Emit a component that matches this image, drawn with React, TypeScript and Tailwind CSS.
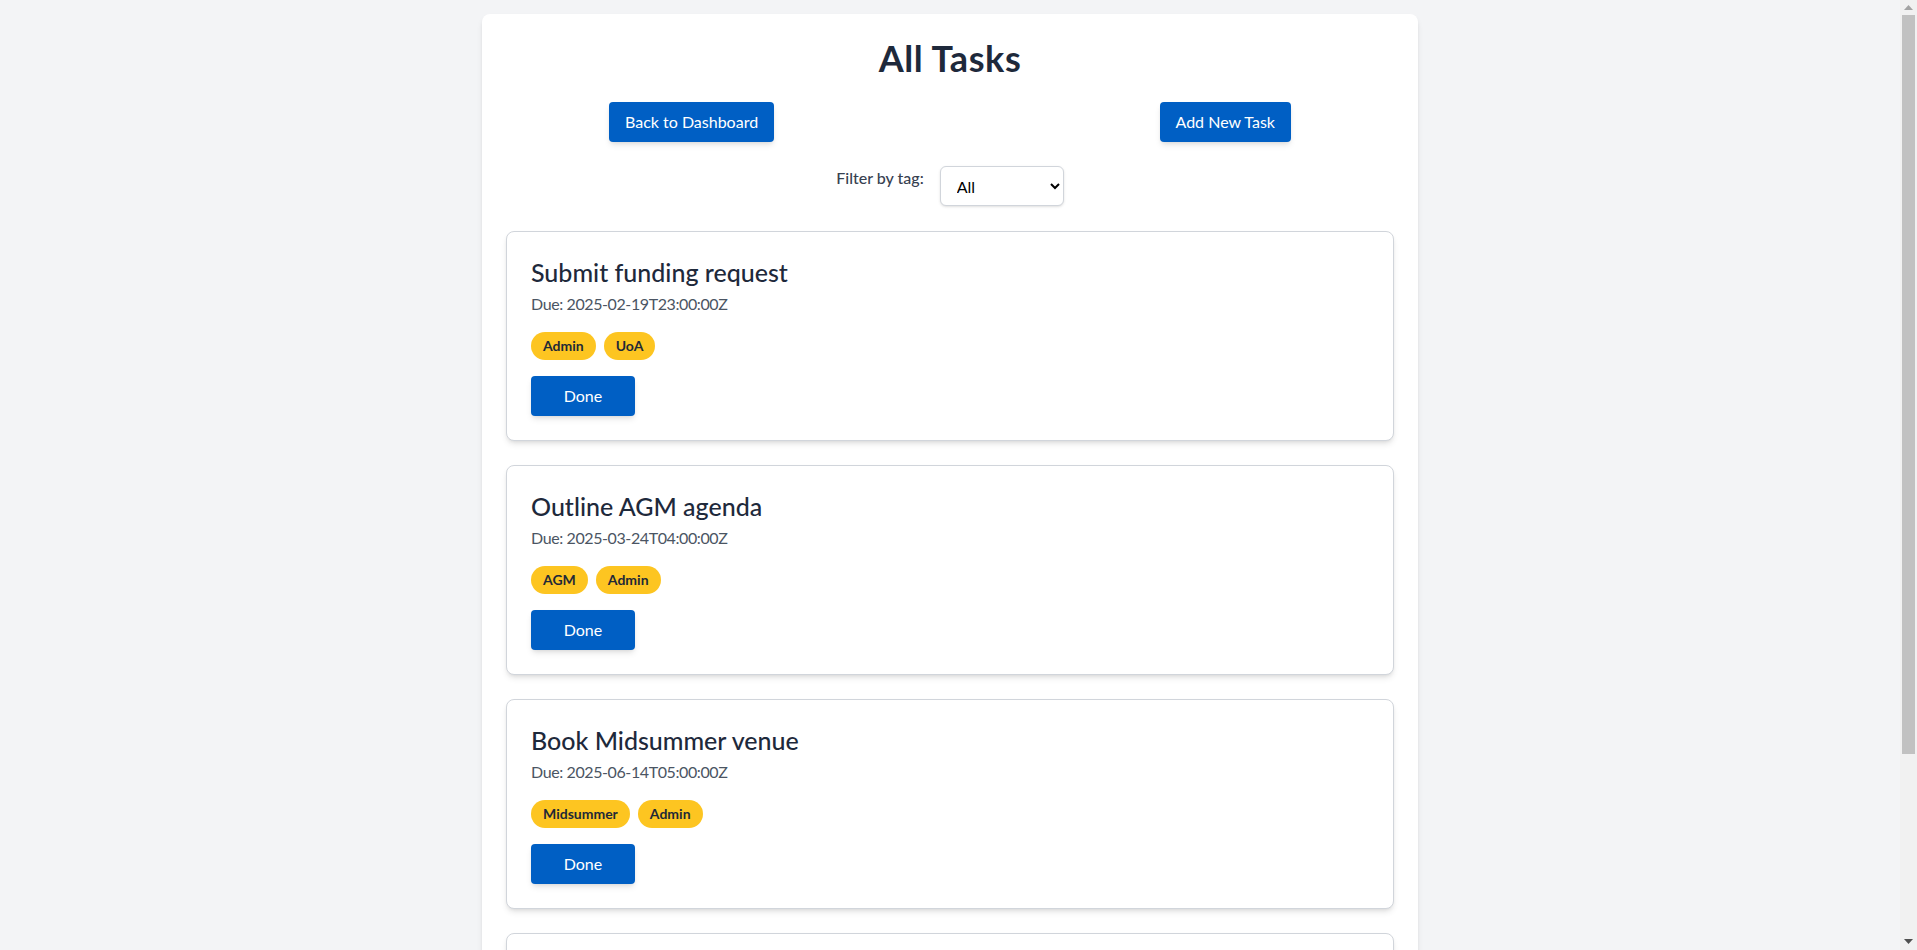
import React from "react";

type Task = { title: string; due: string; tags: string[] };

const tasks: Task[] = [
  { title: "Submit funding request", due: "2025-02-19T23:00:00Z", tags: ["Admin", "UoA"] },
  { title: "Outline AGM agenda", due: "2025-03-24T04:00:00Z", tags: ["AGM", "Admin"] },
  { title: "Book Midsummer venue", due: "2025-06-14T05:00:00Z", tags: ["Midsummer", "Admin"] },
  { title: "Send Midsummer invitations", due: "2025-06-20T05:00:00Z", tags: ["Midsummer"] },
];

function TaskCard({ task }: { task: Task }) {
  return (
    <div className="rounded-lg border border-[#d1d5db] bg-white p-6 shadow-md">
      <h2 className="text-[25px] leading-8 font-medium text-[#1e293b]">{task.title}</h2>
      <p className="mt-1 text-base leading-6 tracking-[-0.4px] text-[#4b5563]">Due: {task.due}</p>
      <div className="mt-4 flex gap-2">
        {task.tags.map((t) => (
          <span
            key={t}
            className="rounded-full bg-[#fdc521] px-3 py-1 text-sm leading-5 font-bold text-[#1f2937]"
          >
            {t}
          </span>
        ))}
      </div>
      <button className="mt-4 w-[104px] rounded bg-[#005fc4] py-2 text-base leading-6 text-white shadow-md">
        Done
      </button>
    </div>
  );
}

function FakeScrollbar() {
  return (
    <div className="flex h-screen w-[17px] shrink-0 flex-col bg-[#f1f1f1]">
      <div className="flex h-[15px] items-center justify-center">
        <svg width="9" height="5" viewBox="0 0 9 5">
          <polygon points="4.5,0 9,5 0,5" fill="#a3a3a3" />
        </svg>
      </div>
      <div className="flex-1 px-[2px]">
        <div className="h-[739px] bg-[#c1c1c1]" />
      </div>
      <div className="flex h-[17px] items-center justify-center">
        <svg width="9" height="5" viewBox="0 0 9 5">
          <polygon points="0,0 9,0 4.5,5" fill="#505050" />
        </svg>
      </div>
    </div>
  );
}

export default function App() {
  return (
    <div className="flex h-screen overflow-hidden" style={{ fontFamily: "Lato, 'Noto Sans', sans-serif" }}>
      <div className="min-w-0 flex-1 overflow-hidden bg-[#f3f4f6] py-[14px]">
        <div className="mx-auto w-[936px] rounded-lg bg-white p-6 shadow-md">
          <h1 className="mb-6 text-center text-4xl leading-10 font-bold tracking-[0.6px] text-[#1e293b]">
            All Tasks
          </h1>
          <div className="mb-6 flex justify-between px-[103px]">
            <button className="rounded bg-[#005fc4] px-4 py-2 text-base leading-6 text-white shadow-md">
              Back to Dashboard
            </button>
            <button className="rounded bg-[#005fc4] px-4 py-2 text-base leading-6 text-white shadow-md">
              Add New Task
            </button>
          </div>
          <div className="mb-[25px] flex items-start justify-center gap-4">
            <label className="text-base leading-6 font-medium text-[#374151]">Filter by tag:</label>
            <select className="h-10 w-[124px] rounded-md border border-[#d1d5db] bg-white px-3 text-base font-normal text-black shadow-sm">
              <option>All</option>
              <option>Admin</option>
              <option>UoA</option>
              <option>AGM</option>
              <option>Midsummer</option>
            </select>
          </div>
          <div className="flex flex-col gap-6">
            {tasks.map((t) => (
              <TaskCard key={t.title} task={t} />
            ))}
          </div>
        </div>
      </div>
      <FakeScrollbar />
    </div>
  );
}
